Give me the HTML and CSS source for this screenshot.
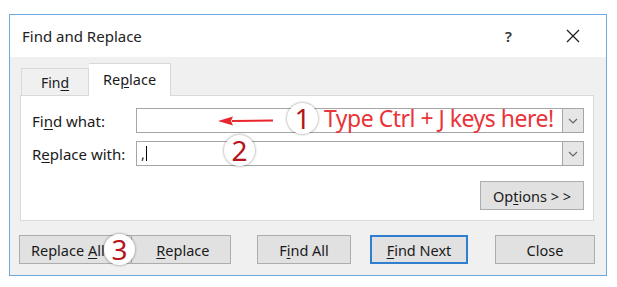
FILE: index.html
```html
<!DOCTYPE html>
<html lang="en">
<head>
    <meta charset="UTF-8">
    <title>Find and Replace</title>
    <link rel="stylesheet" href="styles.css">
</head>
<body>
    <div class="dialog">
        <div class="titlebar">
            <span class="title">Find and Replace</span>
            <span class="help">?</span>
            <span class="close-x">
                <svg width="14" height="14" viewBox="0 0 14 14"><path d="M1 1 L13 13 M13 1 L1 13" stroke="#222" stroke-width="1.3" fill="none"/></svg>
            </span>
        </div>

        <div class="body">
            <div class="tabs">
                <div class="tab">Fin<u>d</u></div>
                <div class="tab active">Re<u>p</u>lace</div>
            </div>

            <div class="panel">
                <div class="field-row">
                    <label class="field-label">Fi<u>n</u>d what:</label>
                    <div class="combo">
                        <div class="combo-input"></div>
                        <div class="combo-btn">
                            <svg width="10" height="6" viewBox="0 0 10 6"><path d="M1 1 L5 5 L9 1" stroke="#666" stroke-width="1.2" fill="none"/></svg>
                        </div>
                    </div>
                </div>
                <div class="field-row">
                    <label class="field-label">R<u>e</u>place with:</label>
                    <div class="combo">
                        <div class="combo-input">,<span class="caret"></span></div>
                        <div class="combo-btn">
                            <svg width="10" height="6" viewBox="0 0 10 6"><path d="M1 1 L5 5 L9 1" stroke="#666" stroke-width="1.2" fill="none"/></svg>
                        </div>
                    </div>
                </div>
                <div class="options-row">
                    <button class="btn options">Op<u>t</u>ions &gt; &gt;</button>
                </div>
            </div>

            <div class="buttons">
                <div class="btn-pair">
                    <button class="btn replace-all">Replace <u>A</u>ll</button>
                    <button class="btn replace">&nbsp;<u>R</u>eplace</button>
                </div>
                <button class="btn find-all">F<u>i</u>nd All</button>
                <button class="btn find-next"><u>F</u>ind Next</button>
                <button class="btn close">Close</button>
            </div>
        </div>
    </div>

    <!-- annotations drawn over the dialog -->
    <svg class="arrow" width="56" height="12" viewBox="0 0 56 12">
        <path d="M14 5 L55 4.5 L55 6.5 L14 7 Z" fill="#e8262c"/>
        <path d="M0 6 L15 1.5 L13 6 L15 10.5 Z" fill="#e8262c"/>
    </svg>
    <div class="badge badge-1">1</div>
    <div class="hint">Type Ctrl + J keys here!</div>
    <div class="badge badge-2">2</div>
    <div class="badge badge-3">3</div>
</body>
</html>
```

FILE: styles.css
```css
body {
    margin: 0;
    background-color: #fff;
    font-family: "Noto Sans", "Open Sans", sans-serif;
    color: #1a1a1a;
    position: relative;
    width: 617px;
    height: 287px;
    overflow: hidden;
}
u {
    text-decoration: underline;
    text-underline-offset: 2px;
}
.dialog {
    margin: 14px 0 0 9px;
    width: 596px;
    height: 260px;
    border: 1px solid #6fa8dc;
    display: flex;
    flex-direction: column;
}
.titlebar {
    height: 42px;
    background-color: #fff;
    display: flex;
    align-items: center;
    padding-left: 12px;
    font-size: 15px;
}
.title {
    flex: 1;
    color: #222;
}
.help {
    width: 14px;
    font-size: 15px;
    font-weight: 600;
    color: #333;
    margin-right: 47px;
}
.close-x {
    display: flex;
    margin-right: 26px;
}
.body {
    flex: 1;
    background-color: #f0f0f0;
    padding: 9px 10px 0 10px;
    display: flex;
    flex-direction: column;
}
.tabs {
    display: flex;
    align-items: flex-end;
    height: 29px;
    padding-left: 1px;
}
.tab {
    height: 25px;
    width: 66px;
    border: 1px solid #d9d9d9;
    border-bottom: none;
    background-color: #f0f0f0;
    font-size: 14px;
    display: flex;
    align-items: center;
    justify-content: center;
    padding-top: 1px;
}
.tab.active {
    height: 29px;
    width: 81px;
    background-color: #fff;
    border-left: none;
    position: relative;
    margin-bottom: -1px;
    z-index: 1;
    padding-top: 0;
    padding-bottom: 3px;
    font-size: 14.5px;
}
.panel {
    width: 574px;
    height: 126px;
    border: 1px solid #d9d9d9;
    background-color: #fff;
    padding: 12px 8px 0 10px;
    box-sizing: border-box;
    display: flex;
    flex-direction: column;
    gap: 8px;
}
.field-row {
    display: flex;
    align-items: center;
    height: 25px;
}
.field-label {
    width: 104px;
    font-size: 15px;
    padding-left: 1px;
    white-space: nowrap;
}
.combo {
    display: flex;
    width: 448px;
    height: 25px;
}
.combo-input {
    flex: 1;
    border: 1px solid #a6a6a6;
    border-right: none;
    background-color: #fff;
    font-size: 14px;
    padding-left: 4px;
    display: flex;
    align-items: center;
}
.caret {
    display: inline-block;
    width: 1px;
    height: 15px;
    background-color: #000;
    margin-left: 1px;
}
.combo-btn {
    width: 20px;
    background-color: #e6e6e6;
    border: 1px solid #a6a6a6;
    display: flex;
    align-items: center;
    justify-content: center;
}
.options-row {
    display: flex;
    justify-content: flex-end;
    padding-top: 7px;
    padding-right: 1px;
}
.btn {
    font-family: "Noto Sans", "Open Sans", sans-serif;
    font-size: 14.5px;
    color: #1a1a1a;
    background-color: #e1e1e1;
    border: 1px solid #adadad;
    height: 29px;
    padding: 0;
}
.options {
    width: 104px;
}
.buttons {
    display: flex;
    align-items: center;
    margin-top: 14px;
    margin-left: -1px;
}
.btn-pair {
    display: flex;
}
.replace-all {
    width: 113px;
    text-align: left;
    padding-left: 11px;
}
.replace {
    width: 99px;
    border-left: none;
}
.find-all {
    width: 94px;
    margin-left: 26px;
}
.find-next {
    width: 98px;
    margin-left: 19px;
    border: 2px solid #2f7fd0;
}
.close {
    width: 100px;
    margin-left: 27px;
}
.arrow {
    position: absolute;
    left: 218px;
    top: 115px;
}
.badge {
    position: absolute;
    width: 31px;
    height: 31px;
    border-radius: 50%;
    background-color: #fff;
    box-shadow: 0 0 2px 1px rgba(0, 0, 0, 0.22);
    color: #b5151b;
    font-family: "Noto Sans", sans-serif;
    font-size: 28px;
    line-height: 31px;
    text-align: center;
}
.badge-1 {
    left: 287px;
    top: 103px;
}
.badge-2 {
    left: 224px;
    top: 135px;
}
.badge-3 {
    left: 104px;
    top: 234px;
}
.hint {
    position: absolute;
    left: 324px;
    top: 102px;
    font-family: "Noto Sans", sans-serif;
    font-size: 23px;
    letter-spacing: -0.5px;
    color: #e8343a;
    white-space: nowrap;
}
```
